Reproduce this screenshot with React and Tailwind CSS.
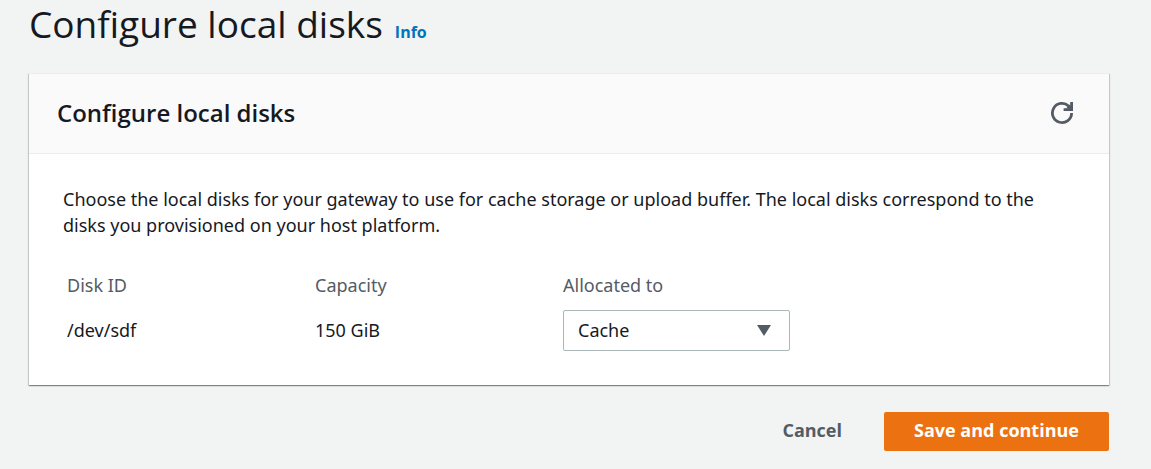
import React, { useState } from "react";

const disks = [{ id: "/dev/sdf", capacity: "150 GiB" }];

const RefreshIcon = () => (
  <svg viewBox="0 0 24 24" className="size-6" fill="none" stroke="currentColor" strokeWidth="2.8" aria-hidden="true">
    <path d="M21.600 12a9.600 9.600 0 1 1-3-7l2.600 2.600" />
    <path d="M21.600 1v7.700h-8" />
    <path d="M16 7.500l3.500-4 2 4z" fill="currentColor" stroke="none" />
  </svg>
);

const DiskTable = () => {
  const [allocation, setAllocation] = useState("cache");

  return (
    <table className="mt-[34px] ml-1 w-[744px] table-fixed text-left">
      <thead>
        <tr className="text-[#545b64]">
          <th className="pb-3 font-normal">Disk ID</th>
          <th className="pb-3 font-normal">Capacity</th>
          <th className="pb-3 font-normal">Allocated to</th>
        </tr>
      </thead>
      <tbody>
        {disks.map((disk) => (
          <tr key={disk.id}>
            <td className="pb-0.5">{disk.id}</td>
            <td className="pb-0.5">{disk.capacity}</td>
            <td>
              <div className="relative w-[227px]">
                <select
                  aria-label="Allocated to"
                  value={allocation}
                  onChange={(e) => setAllocation(e.target.value)}
                  className="block h-[41px] w-full appearance-none rounded-xs border border-[#aab7b8] bg-white px-3.5 pb-0.5"
                >
                  <option value="cache">Cache</option>
                  <option value="upload">Upload buffer</option>
                </select>
                <svg viewBox="0 0 14 11" className="pointer-events-none absolute top-[15px] right-[19px] h-[11px] w-3.5 fill-[#545b64]" aria-hidden="true">
                  <path d="M0 0h14L7 11z" />
                </svg>
              </div>
            </td>
          </tr>
        ))}
      </tbody>
    </table>
  );
};

const App = () => {
  return (
    <main className="min-h-screen bg-[#f2f3f3] pr-[42px] pl-[29px] font-['Noto_Sans','Open_Sans',sans-serif] text-lg leading-[26px] text-[#16191f]">
      <header className="flex items-baseline gap-3 pt-0.5">
        <h1 className="font-['Open_Sans',sans-serif] text-[37px] leading-[44px]">Configure local disks</h1>
        <a href="#info" className="font-['Open_Sans',sans-serif] text-base font-bold text-[#0073bb]">Info</a>
      </header>

      <section className="mt-[27px] border-t border-[#eaeded] bg-white shadow-[0_1px_1px_0_rgba(0,28,36,0.3),1px_1px_1px_0_rgba(0,28,36,0.15),-1px_1px_1px_0_rgba(0,28,36,0.15)]">
        <div className="flex h-20 items-center justify-between border-b border-[#eaeded] bg-[#fafafa] pr-[35px] pb-0.5 pl-7">
          <h2 className="font-['Open_Sans',sans-serif] text-2xl leading-[26px] font-semibold">Configure local disks</h2>
          <button type="button" aria-label="Refresh" className="text-[#545b64]">
            <RefreshIcon />
          </button>
        </div>
        <div className="px-[34px] pt-8 pb-[34px]">
          <p>
            Choose the local disks for your gateway to use for cache storage or upload buffer. The local disks correspond to the
            disks you provisioned on your host platform.
          </p>
          <DiskTable />
        </div>
      </section>

      <footer className="mt-[27px] flex justify-end gap-[42px] pb-[18px] font-['Open_Sans',sans-serif] text-lg leading-[26px] font-bold">
        <button type="button" className="pb-1 text-[#545b64]">Cancel</button>
        <button type="button" className="h-[39px] w-[225px] rounded-xs bg-[#ec7211] pb-1 text-white">Save and continue</button>
      </footer>
    </main>
  );
};

export default App;
